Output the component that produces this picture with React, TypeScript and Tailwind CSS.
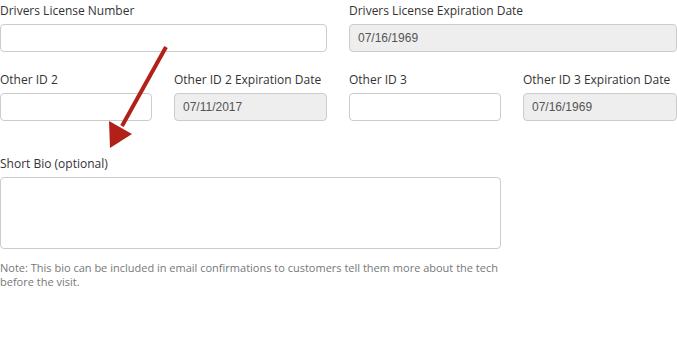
import React from "react";

const labelCls = "block text-[12px] leading-[18px] pt-[2px] text-[#333] h-[20px] whitespace-nowrap";
const inputCls = "block w-full h-[28px] rounded-[4px] border border-[#cccccc] bg-white px-[10px] text-[12px] text-[#555] outline-none";
const disabledCls = "block w-full h-[28px] rounded-[4px] border border-[#cccccc] bg-[#eeeeee] px-[8px] text-[12px] text-[#555] outline-none";

function Field({ label, value, disabled, span }: { label: string; value?: string; disabled?: boolean; span?: boolean }) {
  return (
    <div className={span ? "col-span-2" : ""}>
      <label className={labelCls}>{label}</label>
      <input
        className={(disabled ? disabledCls : inputCls) + " mt-[4px]"}
        defaultValue={value ?? ""}
        disabled={disabled}
        style={{ fontFamily: "Arial, 'Liberation Sans', sans-serif" }}
      />
    </div>
  );
}

export default function App() {
  return (
    <div className="relative w-[677px] h-[353px] bg-white overflow-hidden" style={{ fontFamily: "'Open Sans', sans-serif" }}>
      <div className="grid grid-cols-[152px_153px_152px_154px] gap-x-[22px]">
        <Field label="Drivers License Number" span />
        <Field label="Drivers License Expiration Date" value="07/16/1969" disabled span />
      </div>
      <div className="grid grid-cols-[152px_153px_152px_154px] gap-x-[22px] mt-[17px]">
        <Field label="Other ID 2" />
        <Field label="Other ID 2 Expiration Date" value="07/11/2017" disabled />
        <Field label="Other ID 3" />
        <Field label="Other ID 3 Expiration Date" value="07/16/1969" disabled />
      </div>
      <div className="w-[501px] mt-[32px]">
        <label className={labelCls}>Short Bio (optional)</label>
        <textarea className="block w-full h-[72px] mt-[4px] rounded-[4px] border border-[#cccccc] bg-white resize-none outline-none" />
        <p className="mt-[12px] text-[11px] leading-[14px] text-[#777] w-[510px]">
          Note: This bio can be included in email confirmations to customers tell them more about the tech before the visit.
        </p>
      </div>
      <svg className="absolute left-0 top-0 pointer-events-none" width="677" height="353">
        <line x1="166" y1="47" x2="122" y2="126" stroke="#b22118" strokeWidth="4" />
        <polygon points="109,121 132,134 110,148" fill="#b22118" />
      </svg>
    </div>
  );
}
